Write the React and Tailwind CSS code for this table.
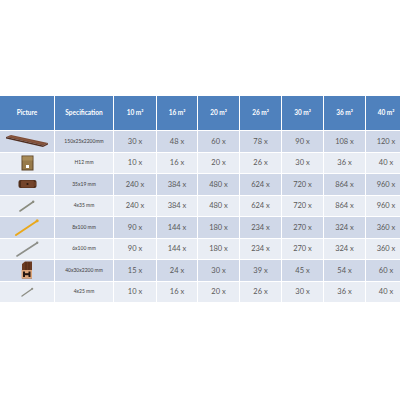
import React from "react";

const cols = ["10 m²", "16 m²", "20 m²", "26 m²", "30 m²", "36 m²", "40 m²"];

const rows = [
  { spec: "150x25x2200mm", vals: [30, 48, 60, 78, 90, 108, 120], pic: "board" },
  { spec: "H12 mm", vals: [10, 16, 20, 26, 30, 36, 40], pic: "spacer" },
  { spec: "35x19 mm", vals: [240, 384, 480, 624, 720, 864, 960], pic: "clip" },
  { spec: "4x35 mm", vals: [240, 384, 480, 624, 720, 864, 960], pic: "screwS" },
  { spec: "8x100 mm", vals: [90, 144, 180, 234, 270, 324, 360], pic: "screwY" },
  { spec: "6x100 mm", vals: [90, 144, 180, 234, 270, 324, 360], pic: "screwL" },
  { spec: "40x30x2200 mm", vals: [15, 24, 30, 39, 45, 54, 60], pic: "joist" },
  { spec: "4x25 mm", vals: [10, 16, 20, 26, 30, 36, 40], pic: "screwT" },
];

const Pic = ({ type }) => {
  if (type === "board")
    return (
      <svg width="44" height="14" viewBox="0 0 44 14">
        <polygon points="1,3 6,1 43,9 38,11.5" fill="#7d4c36" />
        <polygon points="1,3 38,11.5 38,13 1,4.5" fill="#4f2d1f" />
        <polygon points="38,11.5 43,9 43,10.5 38,13" fill="#5f3626" />
        <line x1="4" y1="2" x2="40" y2="10.2" stroke="#9c6b52" strokeWidth="0.4" />
      </svg>
    );
  if (type === "spacer")
    return (
      <svg width="13" height="16" viewBox="0 0 13 16">
        <rect x="0.5" y="0.5" width="12" height="15" fill="#5e4628" />
        <rect x="1.5" y="1.5" width="10" height="13" fill="#977a4a" />
        <rect x="1.5" y="1.5" width="10" height="4" fill="#a88b58" />
        <rect x="5" y="10" width="3" height="3" fill="#fff" />
      </svg>
    );
  if (type === "clip")
    return (
      <svg width="19" height="10" viewBox="0 0 19 10">
        <rect x="0.5" y="1" width="18" height="8" rx="2" fill="#4f2d19" />
        <rect x="3" y="1.5" width="13" height="7" rx="1" fill="#74442a" />
        <circle cx="9.5" cy="5" r="1.1" fill="#2b170c" />
        <rect x="15.5" y="3" width="2.5" height="4" fill="#6a3d24" />
      </svg>
    );
  if (type === "joist")
    return (
      <svg width="12" height="18" viewBox="0 0 12 18">
        <polygon points="1,3 4,0.5 11,0.5 11,17.5 1,17.5" fill="#6a3a22" />
        <line x1="5" y1="1" x2="5" y2="9" stroke="#3a1f10" strokeWidth="0.6" />
        <line x1="8" y1="1" x2="8" y2="9" stroke="#3a1f10" strokeWidth="0.6" />
        <rect x="0.5" y="9" width="10.5" height="8.5" fill="#dca57a" />
        <rect x="2" y="10.5" width="2" height="5.5" fill="#241610" />
        <rect x="7.5" y="10.5" width="2" height="5.5" fill="#241610" />
        <rect x="3.5" y="12.2" width="4.5" height="2" fill="#241610" />
      </svg>
    );
  const cfg = {
    screwS: { w: 16, h: 12, c: "#8b8d80", s: 1.6 },
    screwY: { w: 24, h: 17, c: "#eaa81a", s: 2 },
    screwL: { w: 23, h: 16, c: "#8e908a", s: 1.6 },
    screwT: { w: 13, h: 10, c: "#8e8f86", s: 1.4 },
  }[type];
  return (
    <svg width={cfg.w} height={cfg.h} viewBox={`0 0 ${cfg.w} ${cfg.h}`}>
      <line x1="1" y1={cfg.h - 1} x2={cfg.w - 2} y2="2" stroke={cfg.c} strokeWidth={cfg.s} strokeLinecap="round" />
      <circle cx={cfg.w - 1.8} cy="1.8" r={cfg.s * 0.75} fill={cfg.c} />
    </svg>
  );
};

export default function App() {
  return (
    <div className="w-[400px] h-[400px] bg-white pt-[96px]" style={{ fontFamily: "Lato, 'Open Sans', sans-serif" }}>
      <div className="grid grid-cols-[54px_58px_42px_40px_41px_41px_41px_41px_40px] grid-rows-[34px_repeat(8,20.5px)] gap-px bg-white">
        <div className="bg-[#4f81bd] text-white font-bold text-[6.5px] flex items-center justify-center">Picture</div>
        <div className="bg-[#4f81bd] text-white font-bold text-[6.5px] flex items-center justify-center">Specification</div>
        {cols.map((c) => (
          <div key={c} className="bg-[#4f81bd] text-white font-bold text-[6.5px] flex items-center justify-center">
            {c}
          </div>
        ))}
        {rows.map((r, i) => {
          const bg = i % 2 === 0 ? "bg-[#d0d8e8]" : "bg-[#e9edf4]";
          return (
            <React.Fragment key={i}>
              <div className={`${bg} flex items-center justify-center`}>
                <Pic type={r.pic} />
              </div>
              <div className={`${bg} flex items-center justify-center text-[5px] text-[#404040]`}>{r.spec}</div>
              {r.vals.map((v, j) => (
                <div key={j} className={`${bg} flex items-center justify-center text-[7.5px] text-[#595959]`}>
                  {v} x
                </div>
              ))}
            </React.Fragment>
          );
        })}
      </div>
    </div>
  );
}
